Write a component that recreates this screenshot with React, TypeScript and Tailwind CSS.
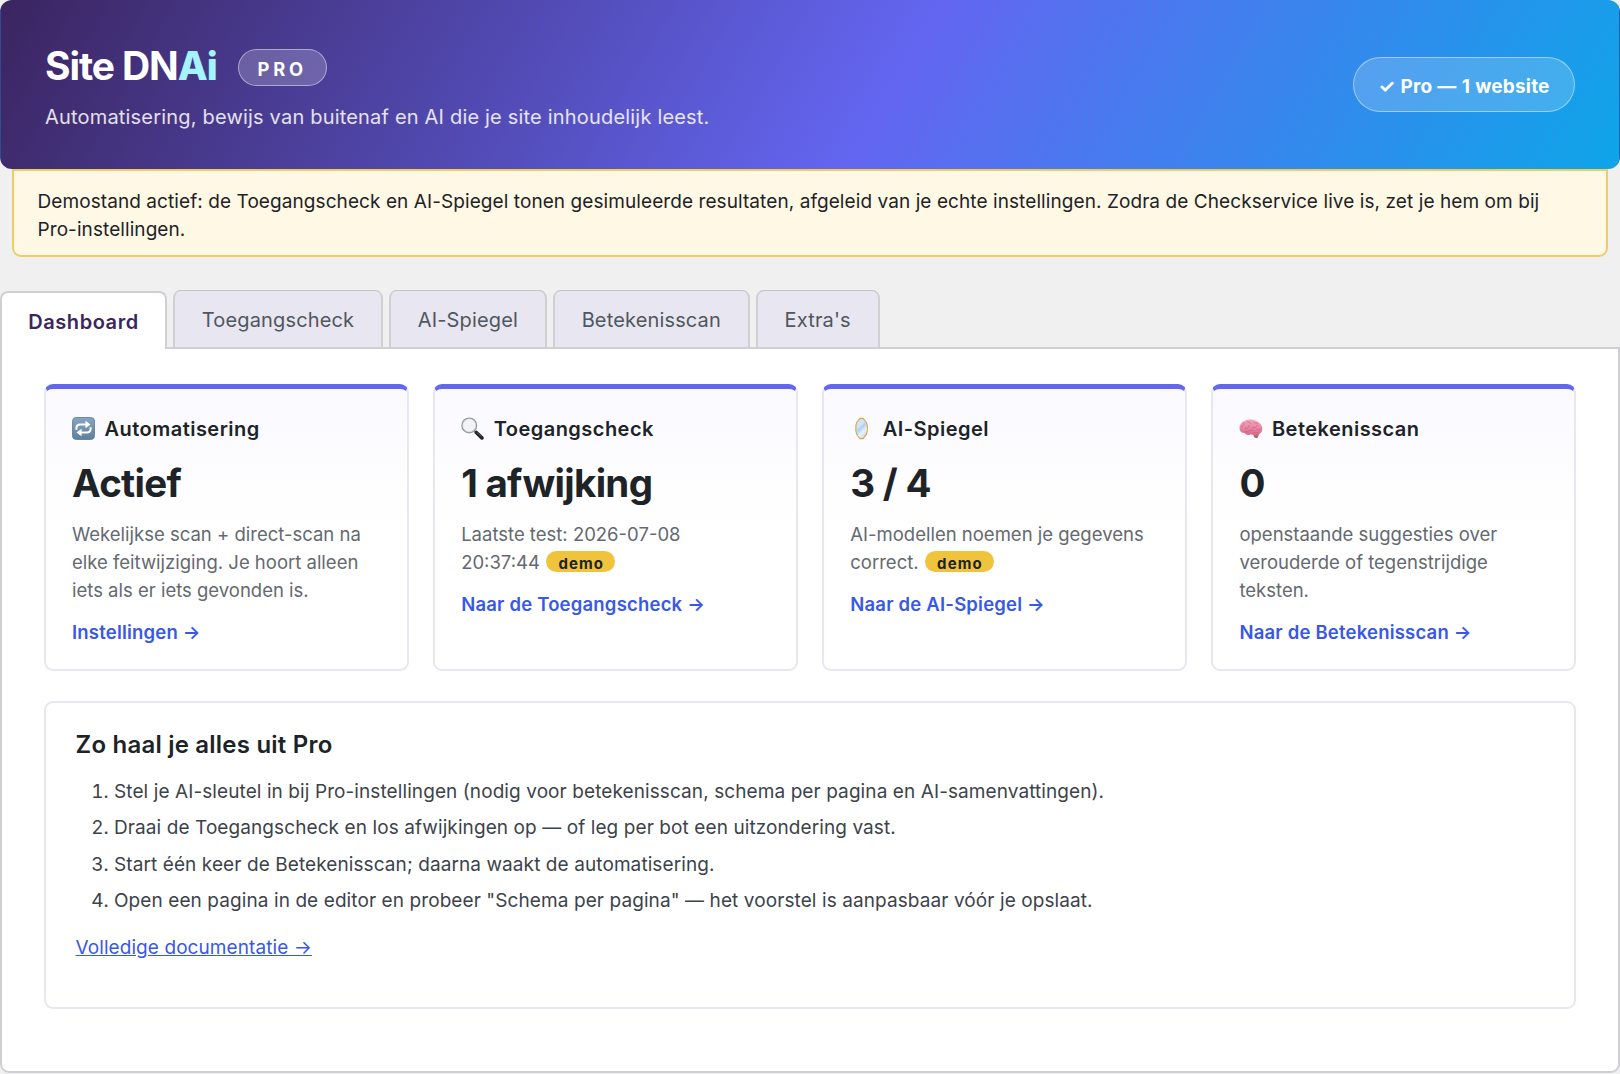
import React from "react";

interface StatCard {
  icon: React.ReactNode;
  title: string;
  value: string;
  lines: string[];
  demo?: boolean;
  link: string;
}

const RepeatIcon = () => (
  <svg width="23" height="23" viewBox="0 0 24 24" className="block">
    <defs>
      <linearGradient id="repeat-bg" x1="0" y1="0" x2="0" y2="1">
        <stop offset="0" stopColor="#87a5c0" />
        <stop offset="1" stopColor="#5f7f9f" />
      </linearGradient>
    </defs>
    <rect x="0.5" y="0.5" width="23" height="23" rx="4" fill="url(#repeat-bg)" stroke="#66849f" />
    <g fill="none" stroke="#fff" strokeWidth="2.1">
      <path d="M4.600 13.200v-1.400c0-2.400 1.500-3.900 3.900-3.900h6.300" />
      <path d="M19.400 10.800v1.400c0 2.400-1.500 3.900-3.900 3.900H9.200" />
    </g>
    <path d="M14 4l5.400 3.900-5.400 3.900zM10 12.200l-5.400 3.900 5.400 3.900z" fill="#fff" />
  </svg>
);

const SearchIcon = () => (
  <svg width="23" height="23" viewBox="0 0 24 24" className="block">
    <path d="M13.8 14.2l2 2" stroke="#8b9196" strokeWidth="1.8" />
    <path d="M16 16.2l5.8 5.6" stroke="#23272a" strokeWidth="3.8" strokeLinecap="round" />
    <path d="M16.6 15.9l4.6 4.4" stroke="#5c6266" strokeWidth="0.8" />
    <circle cx="8.6" cy="8.8" r="7.6" fill="#f1f3f4" stroke="#8d969c" strokeWidth="1.5" />
    <circle cx="8.6" cy="8.8" r="6.8" fill="none" stroke="#d5dadd" strokeWidth="0.7" />
  </svg>
);

const MirrorIcon = () => (
  <svg width="23" height="23" viewBox="0 0 24 24" className="block">
    <path
      d="M10.300 1.500h3.400l3.400 4.200 1 3.600v5l-1 3.600-3.400 4.600h-3.400l-3.300-4.600-.9-3.600v-5l.9-3.600z"
      fill="#cfe4f8"
      stroke="#dba94a"
      strokeWidth="1.2"
    />
    <path d="M6.800 13.800L15.800 5.200l1.400 2.600L7.100 17.400z" fill="#b3d3f1" />
    <path d="M8.100 19l9.300-8.600v3.600l-7 7.400z" fill="#e2f0fc" />
  </svg>
);

const BrainIcon = () => (
  <svg width="24" height="23" viewBox="0 0 24 23" className="block">
    <defs>
      <linearGradient id="brain-bg" x1="0" y1="0" x2="0" y2="1">
        <stop offset="0" stopColor="#f7a9be" />
        <stop offset="1" stopColor="#d8688c" />
      </linearGradient>
    </defs>
    <path d="M14 17.2l6.5-1.6-1.7 5c-1 1-2.7.5-3.6-.6z" fill="#b5656f" />
    <path
      d="M.6 12.3C.2 8.6 2 5.200 5.600 4c3.200-2 8.700-2 12 .2 3.300 1.200 5.600 4.200 5.700 7.400.2 3.200-1.700 5.600-4.600 5.900-2.500.9-4.700.6-6.500-.2-2.400 1.300-5.500.8-6.500-1.200C3.300 16.200 1 15 .6 12.300z"
      fill="url(#brain-bg)"
    />
    <g fill="none" stroke="#c75a80" strokeWidth="0.6" strokeLinecap="round">
      <path d="M2.600 10c1.600-.8 2.600-2.600 2.400-4M6 11.500c2.500.4 4-1 4.200-3.200M8 5c1.800-.6 3.200.2 3.600 1.500" />
      <path d="M5 15c3.400 0 5-1.700 8.800-1.900M13.500 10.600c2 .6 4.200-.4 4.600-2.500M14.500 4.800c.9 1.200 2.500 1.700 4 1.400" />
      <path d="M12.500 17c1.500-1.800 4-1.900 5.800-1.500M18 12.500c1.600.6 3.200.2 4-.9" />
    </g>
  </svg>
);

const tabs = ["Toegangscheck", "AI-Spiegel", "Betekenisscan", "Extra's"];

const cards: StatCard[] = [
  {
    icon: <RepeatIcon />,
    title: "Automatisering",
    value: "Actief",
    lines: ["Wekelijkse scan + direct-scan na", "elke feitwijziging. Je hoort alleen", "iets als er iets gevonden is."],
    link: "Instellingen →",
  },
  {
    icon: <SearchIcon />,
    title: "Toegangscheck",
    value: "1 afwijking",
    lines: ["Laatste test: 2026-07-08", "20:37:44"],
    demo: true,
    link: "Naar de Toegangscheck →",
  },
  {
    icon: <MirrorIcon />,
    title: "AI-Spiegel",
    value: "3 / 4",
    lines: ["AI-modellen noemen je gegevens", "correct."],
    demo: true,
    link: "Naar de AI-Spiegel →",
  },
  {
    icon: <BrainIcon />,
    title: "Betekenisscan",
    value: "0",
    lines: ["openstaande suggesties over", "verouderde of tegenstrijdige", "teksten."],
    link: "Naar de Betekenisscan →",
  },
];

const steps = [
  "Stel je AI-sleutel in bij Pro-instellingen (nodig voor betekenisscan, schema per pagina en AI-samenvattingen).",
  "Draai de Toegangscheck en los afwijkingen op — of leg per bot een uitzondering vast.",
  "Start één keer de Betekenisscan; daarna waakt de automatisering.",
  'Open een pagina in de editor en probeer "Schema per pagina" — het voorstel is aanpasbaar vóór je opslaat.',
];

const Header = () => (
  <header className="flex h-[169px] justify-between rounded-[12px] border-x border-l-[#3b2a66]/70 border-r-[#1688d0]/60 bg-[linear-gradient(120deg,#3b2560_0%,#6366f1_55%,#0ea5e9_100%)] pl-[44px] pr-[44px]">
    <div className="pt-[46px]">
      <div className="flex items-start">
        <h1 className="text-[39px] font-bold leading-[40px] tracking-[-1.1px] text-white">
          Site DN<span className="font-extrabold text-[#a5f3fc]">Ai</span>
        </h1>
        <span className="ml-[21px] mt-[3px] h-[37px] w-[89px] rounded-full border border-white/45 bg-white/20 pl-[19px] pt-px text-[18.3px] font-bold leading-[36px] tracking-[3.8px] text-white">
          PRO
        </span>
      </div>
      <p className="mt-[17px] text-[20px] leading-[28px] tracking-[0.19px] text-white/85">
        Automatisering, bewijs van buitenaf en AI die je site inhoudelijk leest.
      </p>
    </div>
    <span className="mt-[57px] h-[55px] w-[222px] whitespace-nowrap rounded-full border border-white/45 bg-white/18 pt-0.5 text-center text-[19px] font-bold leading-[54px] tracking-[0.2px] text-white [word-spacing:0.4px]">
      ✓ Pro — 1 website
    </span>
  </header>
);

const Card: React.FC<{ card: StatCard }> = ({ card }) => (
  <div className="h-[287px] rounded-[9px] border-2 border-t-[5px] border-[#e8e6f0] border-t-[#6366f1] bg-linear-to-b from-[#faf9ff] to-white to-50% pl-[26px] pt-[26px]">
    <h3 className="flex items-center text-[20px] font-semibold leading-[28px] tracking-[0.47px] text-[#1d2327]">
      <span className="mr-[9.5px] w-[23px] -translate-y-px">{card.icon}</span>
      {card.title}
    </h3>
    <div className="mt-[16px] text-[38.5px] font-bold leading-[48px] tracking-[-0.7px] text-[#1d2327]">{card.value}</div>
    <p className="mt-[13px] whitespace-nowrap text-[18.5px] leading-[28px] text-[#646970]">
      {card.lines.map((line, i) => (
        <React.Fragment key={line}>
          {i > 0 && <br />}
          {line}
        </React.Fragment>
      ))}
      {card.demo && (
        <span className="ml-[6.5px] inline-block h-[21px] w-[69px] rounded-full bg-[#f0c33c] pl-[12px] text-[15px] font-bold leading-[25px] tracking-[1.1px] text-[#1d2327]">
          demo
        </span>
      )}
    </p>
    <a className="mt-[14px] block text-[18.5px] font-semibold leading-[28px] tracking-[0.2px] text-[#3858e9]">{card.link}</a>
  </div>
);

const App = () => {
  return (
    <div className="h-[1074px] w-[1620px] overflow-hidden bg-[#f0f0f0] font-['Inter',sans-serif]">
      <Header />

      {/* Demo notice */}
      <div className="mx-[12px] h-[88px] rounded-b-[9px] border-2 border-[#efcd65] bg-[#fff8e5] pl-[23.5px] pt-[17px] text-[19px] leading-[28px] tracking-[0.08px] text-[#1d2327]">
        Demostand actief: de Toegangscheck en AI-Spiegel tonen gesimuleerde resultaten, afgeleid van je echte instellingen. Zodra de Checkservice live is, zet je hem om bij
        <br />
        Pro-instellingen.
      </div>

      {/* Tabs */}
      <nav className="mt-[33px] flex items-end gap-[6px] text-[20px] leading-[28px]">
        <a className="relative -mb-[2px] h-[58px] w-[167px] rounded-t-[8px] border-2 border-b-0 border-[#d0d0d4] bg-white pt-[15px] text-center font-semibold tracking-[0.56px] text-[#3b2560]">
          Dashboard
        </a>
        {tabs.map((tab) => (
          <a
            key={tab}
            className="h-[57px] rounded-t-[8px] border-x-2 border-t border-[#d0d0d4] border-t-[#c3c4c7] bg-[#e8e6f0] px-[26.8px] pt-[15px] tracking-[0.15px] text-[#50575e]"
          >
            {tab}
          </a>
        ))}
      </nav>

      <main className="h-[726px] rounded-b-[9px] border-2 border-[#d0d0d4] bg-white px-[42px] pt-[35px]">
        <div className="grid grid-cols-4 gap-[24.6px]">
          {cards.map((card) => (
            <Card key={card.title} card={card} />
          ))}
        </div>

        <section className="mt-[30px] h-[308px] rounded-[9px] border-2 border-[#e8e6f0] pl-[29.5px] pt-[26px]">
          <h2 className="text-[24px] font-semibold leading-[32px] tracking-[0.22px] text-[#1d2327]">Zo haal je alles uit Pro</h2>
          <ol className="mt-[17px] list-decimal space-y-[8.3px] pl-[38.5px] text-[19px] leading-[28px] tracking-[0.09px] text-[#3c434a]">
            {steps.map((step) => (
              <li key={step}>{step}</li>
            ))}
          </ol>
          <a className="mt-[19px] inline-block text-[19px] leading-[28px] tracking-[0.08px] text-[#3858e9] underline">Volledige documentatie →</a>
        </section>
      </main>
    </div>
  );
};

export default App;
